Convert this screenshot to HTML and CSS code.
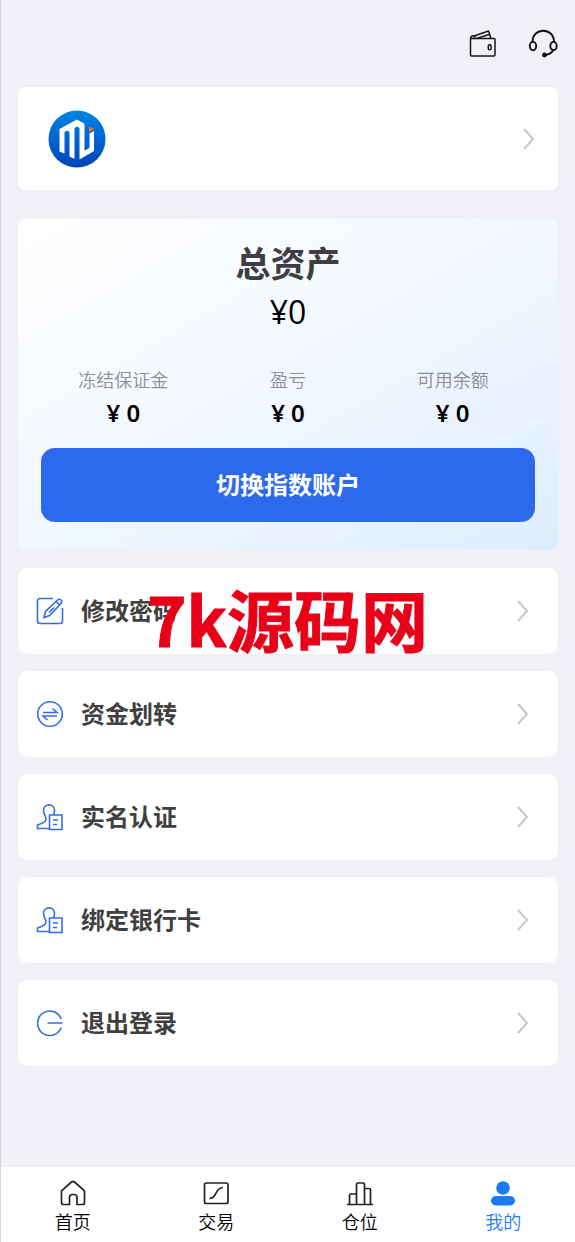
FILE: index.html
```html
<!DOCTYPE html>
<html lang="zh-CN">
<head>
<meta charset="utf-8">
<meta name="viewport" content="width=device-width, initial-scale=1">
<title>我的</title>
<link rel="stylesheet" href="styles.css">
</head>
<body>
<svg class="defs" aria-hidden="true">
  <symbol id="chevron" viewBox="0 0 12 22"><path d="M1 1l9 10-9 10" fill="none" stroke="#c8c8c8" stroke-width="2"/></symbol>
  <symbol id="stamp" viewBox="0 0 28 28"><path d="M13 25.500H1.500v-3.500c5-1.500 8.500-3 8.500-6C10 13 7.500 11 7.500 7.500c0-7.500 11-7.500 11 0 0 1.500-.5 3-1 4.500M13.500 12h12.500v14.500H13.500zM17 17h5M17 21.500h4"/></symbol>
</svg>
<div class="page">
  <header class="topbar">
    <a class="tool" href="#wallet" aria-label="钱包">
      <svg viewBox="0 0 30 30" fill="none" stroke="#15171c" stroke-width="1.500" stroke-linejoin="round"><rect x="2.500" y="9.500" width="24.500" height="17.500" rx="1"/><path d="M2.500 9.500c0-2 1-2.500 2.500-2.800h3M6 9.500L7.500 6.500 20.500 2l2.500 7.500M8.500 9.500L21 5.500"/><rect x="20.300" y="15.700" width="2.800" height="5" rx="1.300"/></svg>
    </a>
    <a class="tool" href="#service" aria-label="客服">
      <svg viewBox="0 0 30 30" fill="none" stroke="#111" stroke-width="1.900"><path d="M4.500 13C4.500-2 26-2 26 13M25.500 20c-1 4-4 5.500-9 6.200"/><ellipse cx="5" cy="17" rx="3.200" ry="4.200"/><ellipse cx="25.500" cy="17" rx="3.200" ry="4.200"/><circle cx="16.500" cy="26" r="1.500" fill="#111"/></svg>
    </a>
  </header>
  <main class="content">
    <a class="profile" href="#profile" aria-label="个人资料">
      <svg class="avatar" viewBox="0 0 58 58">
        <defs><linearGradient id="blue" x1="0" y1="0" x2="0" y2="1"><stop offset="0" stop-color="#0085e5"/><stop offset="1" stop-color="#0044b9"/></linearGradient></defs>
        <circle cx="29" cy="29" r="28.500" fill="url(#blue)"/>
        <path fill="#fff" d="M11.500 19L29 9.500l7.500 4.300v27l5-3V23.500l4.500-2.500v20L31.500 49.500V18L29 16.500 26.500 18v31L21.500 46.500V22L19 20.500 16.500 22v21.500l-5-2z"/>
        <path fill="#f46a35" d="M41 16.500l5.500 2.500-5.500 3z"/>
      </svg>
      <svg class="chevron"><use href="#chevron"/></svg>
    </a>
    <section class="assets">
      <h1 class="assets-title">总资产</h1>
      <p class="assets-total">¥0</p>
      <dl class="stats">
        <div class="stat"><dt>冻结保证金</dt><dd>¥ 0</dd></div>
        <div class="stat"><dt>盈亏</dt><dd>¥ 0</dd></div>
        <div class="stat"><dt>可用余额</dt><dd>¥ 0</dd></div>
      </dl>
      <button class="switch" type="button">切换指数账户</button>
    </section>
    <nav class="menu" aria-label="账户">
      <a class="item" href="#password">
        <svg class="icon" viewBox="0 0 28 28"><path d="M17 1.500H4A2.500 2.500 0 0 0 1.500 4v20A2.500 2.500 0 0 0 4 26.500h20a2.500 2.500 0 0 0 2.500-2.500V11M8 20.500l1.500-6L21.500 3q2-1.500 3.500 0t0 3.500L13.500 18.500zM20 4.500l3.800 3.800M13 15.500l5-5"/></svg>
        <span class="label">修改密码</span><svg class="chevron"><use href="#chevron"/></svg>
      </a>
      <a class="item" href="#transfer">
        <svg class="icon" viewBox="0 0 28 28"><circle cx="14" cy="14" r="12.300"/><path d="M7 12.500h14L16.500 8.500M21 16H7l4.500 4"/></svg>
        <span class="label">资金划转</span><svg class="chevron"><use href="#chevron"/></svg>
      </a>
      <a class="item" href="#verify">
        <svg class="icon"><use href="#stamp"/></svg>
        <span class="label">实名认证</span><svg class="chevron"><use href="#chevron"/></svg>
      </a>
      <a class="item" href="#bank">
        <svg class="icon"><use href="#stamp"/></svg>
        <span class="label">绑定银行卡</span><svg class="chevron"><use href="#chevron"/></svg>
      </a>
      <a class="item" href="#logout">
        <svg class="icon" viewBox="0 0 28 28"><path d="M25.200 10a12.200 12.200 0 1 0 0 8.500M11.500 14h15"/></svg>
        <span class="label">退出登录</span><svg class="chevron"><use href="#chevron"/></svg>
      </a>
      <span class="watermark">7k源码网</span>
    </nav>
  </main>
  <nav class="tabbar" aria-label="主导航">
    <a class="tab" href="#home"><svg viewBox="0 0 28 28"><path d="M10.500 25.500H4.500q-2 0-2-2V13q0-1 .8-1.800L12.500 3q1.500-1.200 3 0l9.200 8.200q.8.800.8 1.800v10.500q0 2-2 2h-5.500v-7q0-3-3-3h-1.500q-3 0-3 3z"/></svg>首页</a>
    <a class="tab" href="#trade"><svg viewBox="0 0 28 28"><rect x="2.500" y="4" width="23.500" height="20.500" rx="2"/><path d="M7.500 19.500c8 0 5-11 13.500-11"/></svg>交易</a>
    <a class="tab" href="#positions"><svg viewBox="0 0 28 28"><path d="M1 25.500h26M3.500 25.500V16.500q0-1.500 1.500-1.500h5.500M10.500 25.500V5.500q0-1.500 1.500-1.500h5q1.500 0 1.500 1.500v20M18.500 9.500H23q1.500 0 1.500 1.500v14.500"/></svg>仓位</a>
    <a class="tab active" href="#me" aria-current="page"><svg viewBox="0 0 28 28"><circle cx="14" cy="9" r="6.800"/><rect x="2" y="17" width="24" height="9.500" rx="4.700"/></svg>我的</a>
  </nav>
</div>
</body>
</html>
```
FILE: styles.css
```css
* { box-sizing: border-box; }
body {
  margin: 0;
  background: #f0f1f6;
  color: #000;
  font-family: "Noto Sans CJK SC", sans-serif;
}
h1, p, dl, dd { margin: 0; }
a { color: inherit; text-decoration: none; }
svg { display: block; flex: none; }
.defs { position: absolute; width: 0; height: 0; }
.page {
  display: flex;
  flex-direction: column;
  min-height: 100vh;
  border-left: 1px solid #d5d6da;
}
.topbar {
  display: flex;
  justify-content: flex-end;
  align-items: center;
  gap: 30px;
  height: 87px;
  padding: 0 17px;
}
.tool svg { width: 30px; height: 30px; }
.content { flex: 1; padding: 0 17px 24px; }
.profile {
  display: flex;
  align-items: center;
  justify-content: space-between;
  height: 103px;
  padding: 0 23px 0 30px;
  border-radius: 8px;
  background: #fff;
}
.avatar { width: 58px; height: 58px; }
.chevron { width: 12px; height: 22px; }
.assets {
  margin-top: 29px;
  padding: 18px 23px 28px;
  border-radius: 8px;
  background: linear-gradient(150deg, #fff, #f1f7ff 50%, #deedfd);
  text-align: center;
}
.assets-title {
  color: #3e3e44;
  font-size: 35px;
  line-height: 50px;
}
.assets-total {
  font-family: "Open Sans", "Noto Sans CJK SC", sans-serif;
  font-size: 32px;
  line-height: 50px;
}
.stats {
  display: grid;
  grid-template-columns: repeat(3, 1fr);
  margin-top: 27px;
}
.stat dt {
  color: #8c8e96;
  font-size: 18px;
  font-weight: 350;
  line-height: 30px;
}
.stat dd {
  font-family: "Noto Sans", "Noto Sans CJK SC", sans-serif;
  font-size: 24px;
  font-weight: 600;
  line-height: 38px;
}
.switch {
  width: 100%;
  height: 74px;
  margin-top: 16px;
  padding: 0 0 3px;
  border: 0;
  border-radius: 14px;
  background: #2c69eb;
  color: #fff;
  font: bold 24px "Noto Sans CJK SC", sans-serif;
}
.menu {
  position: relative;
  display: grid;
  gap: 17px;
  margin-top: 18px;
}
.item {
  display: flex;
  align-items: center;
  height: 86px;
  padding: 0 29px 0 18px;
  border-radius: 10px;
  background: #fff;
}
.icon {
  width: 28px;
  height: 28px;
  fill: none;
  stroke: #326ee8;
  stroke-width: 1.6;
}
.label {
  flex: 1;
  margin-left: 17px;
  padding-bottom: 4px;
  color: #404040;
  font-size: 24px;
  font-weight: bold;
}
.watermark {
  position: absolute;
  top: 0;
  left: 129px;
  color: #e90018;
  font-size: 67px;
  font-weight: bold;
  line-height: 100px;
  white-space: nowrap;
  pointer-events: none;
  -webkit-text-stroke: 1px #e90018;
}
.tabbar {
  display: grid;
  grid-template-columns: repeat(4, 1fr);
  height: 75px;
  background: #fff;
}
.tab {
  display: flex;
  flex-direction: column;
  align-items: center;
  padding-top: 12px;
  font-size: 18px;
  font-weight: 350;
  line-height: 29px;
}
.tab svg {
  width: 28px;
  height: 28px;
  fill: none;
  stroke: #222;
  stroke-width: 1.7;
}
.tab.active { color: #1c7af5; }
.tab.active svg { fill: #1c7af5; stroke: none; }
```
